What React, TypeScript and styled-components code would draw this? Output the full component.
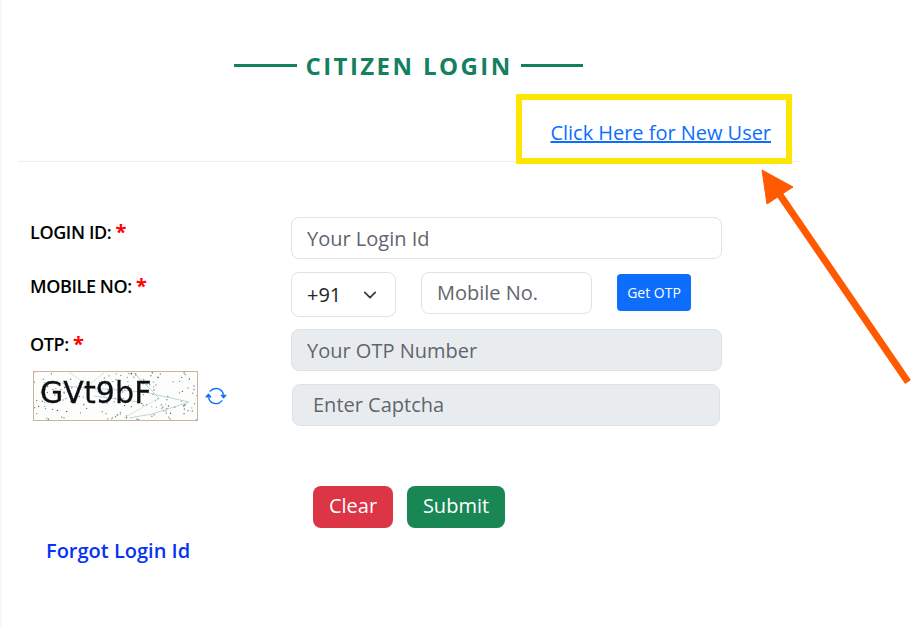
import React from "react";
import styled, { createGlobalStyle } from "styled-components";

const Global = createGlobalStyle`
  html, body { margin: 0; padding: 0; background: #fff; }
  body { font-family: "Open Sans", "Noto Sans", sans-serif; color: #212529; }
  * { box-sizing: border-box; }
`;

const Page = styled.div`
  position: relative;
  width: 912px;
  height: 628px;
  overflow: hidden;
  padding: 48px 0 0 16px;
  border-left: 2px solid #f6f8fb;
`;

const TitleRow = styled.div`
  display: flex;
  align-items: center;
  width: 349px;
  margin-left: 216px;
  height: 36px;
`;

const TitleLine = styled.span`
  flex: 0 0 ${(p: { $w: number }) => p.$w}px;
  height: 3px;
  margin-bottom: 2px;
  background: #15805f;
`;

const Title = styled.h2`
  margin: 0 8.5px 0 8.5px;
  font-size: 24px;
  line-height: 36px;
  font-weight: 700;
  letter-spacing: 2.42px;
  color: #15805f;
  white-space: nowrap;
`;

const LinkRow = styled.div`
  width: 782px;
  height: 78px;
  padding: 34px 29px 0 0;
  text-align: right;
  border-bottom: 1px solid #eceef0;
`;

const NewUserLink = styled.a`
  font-size: 20px;
  line-height: 30px;
  letter-spacing: -0.03px;
  color: #0d6efd;
  text-decoration: underline;
`;

const Form = styled.form`
  display: grid;
  grid-template-columns: 273px 431px;
  padding-top: 55px;
`;

const LabelCell = styled.div`
  padding: ${(p: { $top: number }) => p.$top}px 0 0 12px;
`;

const Label = styled.label`
  font-size: 18px;
  line-height: 24px;
  font-weight: 600;
  letter-spacing: -0.4px;
  color: #000;
  display: block;
`;

const Star = styled.span`
  color: #f00;
  font-size: 20px;
  line-height: 20px;
  font-weight: 700;
  letter-spacing: 0;
`;

const Field = styled.input<{ $w?: number; $off?: boolean; $indent?: number; $lift?: boolean }>`
  display: block;
  width: ${(p) => (p.$w ? `${p.$w}px` : "100%")};
  height: 42px;
  padding: 0 15px ${(p) => (p.$lift ? 2 : 0)}px ${(p) => p.$indent ?? 15}px;
  font: 400 20px/30px "Open Sans", sans-serif;
  color: #212529;
  background: ${(p) => (p.$off ? "#e9ecef" : "#fff")};
  border: 1px solid #dee2e6;
  border-radius: 8px;
  &::placeholder { color: #5f666d; opacity: 1; }
`;

const FieldCell = styled.div`
  padding-bottom: 13px;
`;

const MobileRow = styled.div`
  display: flex;
  align-items: flex-start;
  height: 57px;
`;

const CodeBox = styled.div`
  width: 105px;
  height: 45px;
  margin-right: 25px;
  padding: 0 18px 0 15px;
  display: flex;
  align-items: center;
  justify-content: space-between;
  font-size: 20px;
  border: 1px solid #dee2e6;
  border-radius: 8px;
  color: #212529;
`;

const OtpButton = styled.button`
  width: 74px;
  height: 37px;
  margin: 2px 0 0 25px;
  padding: 0;
  font: 400 14px/21px "Open Sans", sans-serif;
  color: #fff;
  background: #0d6efd;
  border: 0;
  border-radius: 4px;
`;

const CaptchaLeft = styled.div`
  display: flex;
  align-items: center;
  gap: 7px;
  margin: -13px 0 0 15px;
  height: 50px;
`;

const CaptchaImage = styled.div`
  position: relative;
  width: 165px;
  height: 50px;
  border: 1px solid #c8b49c;
  overflow: hidden;
  background: #fdfefc;
`;

const CaptchaText = styled.span`
  position: absolute;
  left: 6px;
  top: 1px;
  font: 400 30px/40px "DejaVu Sans", sans-serif;
  letter-spacing: 0.1px;
  color: #0c0f12;
  filter: blur(0.4px);
  -webkit-text-stroke: 0.3px #0c0f12;
`;

const CaptchaField = styled.div`
  padding: 0 2px 0 1px;
`;

const Actions = styled.div`
  display: flex;
  gap: 14px;
  padding: 60px 0 0 295px;
`;

const ActionButton = styled.button<{ $bg: string; $w: number }>`
  width: ${(p) => p.$w}px;
  height: 42px;
  padding: 0 0 2px;
  font: 400 20px/30px "Open Sans", sans-serif;
  color: #fff;
  background: ${(p) => p.$bg};
  border: 0;
  border-radius: 8px;
`;

const Forgot = styled.a`
  display: block;
  margin: 8px 0 0 28px;
  font-size: 20px;
  line-height: 30px;
  font-weight: 600;
  color: #0533f5;
  text-decoration: none;
`;

const Highlight = styled.div`
  position: absolute;
  left: 514px;
  top: 94px;
  width: 276px;
  height: 70px;
  border: 6px solid #ffe600;
`;

const Arrow = styled.svg`
  position: absolute;
  left: 738px;
  top: 150px;
`;

function makeDots(n: number) {
  const out: { x: number; y: number; c: string }[] = [];
  const cols = ["#777", "#8a6c9c", "#6c9c8a", "#9c7a5a", "#555", "#7ab0d0"];
  for (let i = 0; i < n; i++) {
    const x = (Math.sin(i * 12.9898) * 43758.5453) % 1;
    const y = (Math.sin(i * 78.233) * 12345.6789) % 1;
    out.push({ x: Math.abs(x) * 163, y: Math.abs(y) * 48, c: cols[i % cols.length] });
  }
  return out;
}

const dots = makeDots(170);

export default function App() {
  return (
    <Page>
      <Global />
      <TitleRow>
        <TitleLine $w={63} />
        <Title>CITIZEN LOGIN</Title>
        <TitleLine $w={62} />
      </TitleRow>
      <LinkRow>
        <NewUserLink href="#">Click Here for New User</NewUserLink>
      </LinkRow>
      <Form>
        <LabelCell $top={3}>
          <Label>LOGIN ID: <Star>*</Star></Label>
        </LabelCell>
        <FieldCell>
          <Field placeholder="Your Login Id" />
        </FieldCell>
        <LabelCell $top={2}>
          <Label>MOBILE NO: <Star>*</Star></Label>
        </LabelCell>
        <MobileRow>
          <CodeBox>
            +91
            <svg width="14" height="14" viewBox="0 0 16 16" fill="none" stroke="#343a40" strokeWidth="2" strokeLinecap="round" strokeLinejoin="round">
              <path d="M2 5l6 6 6-6" />
            </svg>
          </CodeBox>
          <Field $w={171} $lift placeholder="Mobile No." />
          <OtpButton type="button">Get OTP</OtpButton>
        </MobileRow>
        <LabelCell $top={3}>
          <Label>OTP: <Star>*</Star></Label>
        </LabelCell>
        <FieldCell>
          <Field $off placeholder="Your OTP Number" disabled />
        </FieldCell>
        <CaptchaLeft>
          <CaptchaImage>
            <svg width="163" height="48" viewBox="0 0 163 48">
              {dots.map((d, i) => (
                <circle key={i} cx={d.x} cy={d.y} r="0.7" fill={d.c} />
              ))}
              <path d="M30 14L110 20L155 30L118 42L95 46M100 1L125 26M60 24L105 30" fill="none" stroke="#a9cdd6" strokeWidth="0.8" />
              <path d="M35 0L75 28M70 1L48 18M90 46L125 26" fill="none" stroke="#b9d8b4" strokeWidth="0.6" />
            </svg>
            <CaptchaText>GVt9bF</CaptchaText>
          </CaptchaImage>
          <svg width="22" height="22" viewBox="0 0 16 16" fill="#0d6efd">
            <path d="M11.534 7h3.932a.25.25 0 0 1 .192.41l-1.966 2.36a.25.25 0 0 1-.384 0l-1.966-2.36a.25.25 0 0 1 .192-.41zm-11 2h3.932a.25.25 0 0 0 .192-.41L2.692 6.23a.25.25 0 0 0-.384 0L.342 8.59A.25.25 0 0 0 .534 9z" />
            <path fillRule="evenodd" d="M8 3c-1.552 0-2.94.707-3.857 1.818a.5.5 0 1 1-.771-.636A6.002 6.002 0 0 1 13.917 7H12.9A5.002 5.002 0 0 0 8 3zM3.1 9a5.002 5.002 0 0 0 8.757 2.182.5.5 0 1 1 .771.636A6.002 6.002 0 0 1 2.083 9H3.1z" />
          </svg>
        </CaptchaLeft>
        <CaptchaField>
          <Field $off $indent={20} $lift placeholder="Enter Captcha" disabled />
        </CaptchaField>
      </Form>
      <Actions>
        <ActionButton type="button" $bg="#dc3545" $w={80}>Clear</ActionButton>
        <ActionButton type="button" $bg="#198754" $w={98}>Submit</ActionButton>
      </Actions>
      <Forgot href="#">Forgot Login Id</Forgot>
      <Highlight />
      <Arrow width="172" height="240" viewBox="0 0 172 240">
        <path d="M168 232L40 45" stroke="#ff5a00" strokeWidth="7" fill="none" />
        <path d="M22 20L53 37L27 54Z" fill="#ff5a00" stroke="#ff5a00" strokeWidth="1" />
      </Arrow>
    </Page>
  );
}
